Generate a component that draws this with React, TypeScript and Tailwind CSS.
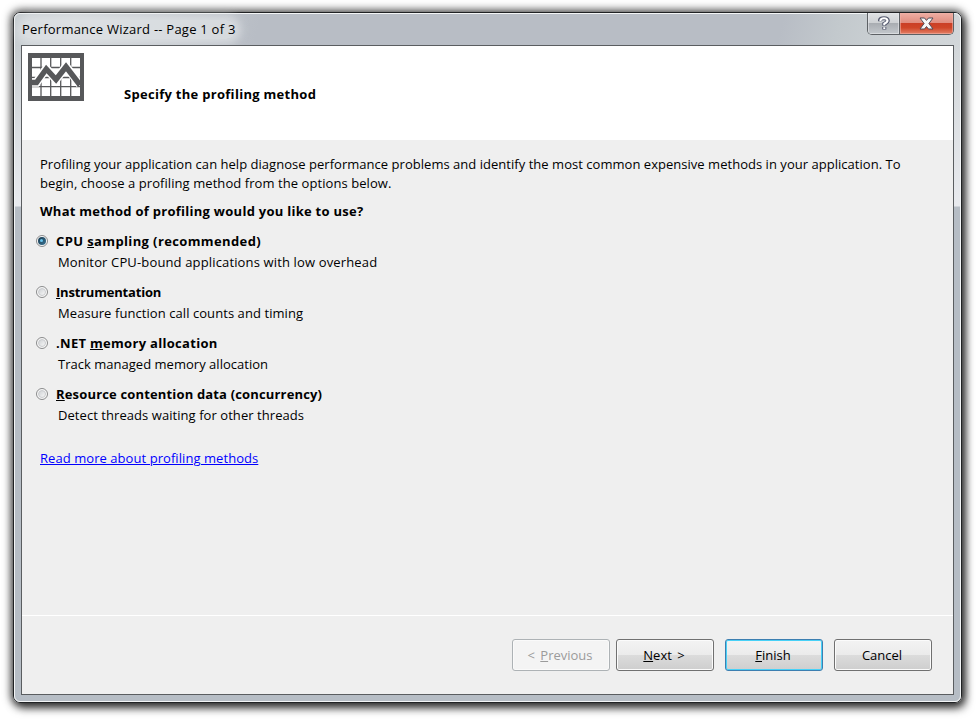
import React from "react";

type Option = { before?: string; key: string; after: string; detail: string; checked?: boolean; track: string; detailTrack: string };

const options: Option[] = [
  { before: "CPU ", key: "s", after: "ampling (recommended)", detail: "Monitor CPU-bound applications with low overhead", checked: true, track: "tracking-[0.38px]", detailTrack: "tracking-[0.145px]" },
  { key: "I", after: "nstrumentation", detail: "Measure function call counts and timing", track: "tracking-[-0.2px]", detailTrack: "tracking-[0.07px]" },
  { before: ".NET ", key: "m", after: "emory allocation", detail: "Track managed memory allocation", track: "tracking-[0.3px]", detailTrack: "tracking-[0.02px]" },
  { key: "R", after: "esource contention data (concurrency)", detail: "Detect threads waiting for other threads", track: "tracking-[0.16px]", detailTrack: "tracking-[0.06px]" },
];

function Key({ children }: { children: string }) {
  return <span className="underline decoration-1 underline-offset-1">{children}</span>;
}

function Radio({ checked }: { checked?: boolean }) {
  return (
    <span className="flex size-3 shrink-0 items-center justify-center rounded-full border border-[#8a8b8c] bg-[#f8f8f8]">
      {checked ? (
        <span className="flex size-2 items-center justify-center rounded-full bg-linear-to-br from-[#17394f] to-[#3b7595]">
          <span className="mb-px mr-px size-[3px] rounded-full bg-[#69c5ee]" />
        </span>
      ) : (
        <span className="size-2 rounded-full border border-[#c9cbce] bg-linear-to-br from-[#cfd2d5] to-[#f7f7f7]" />
      )}
    </span>
  );
}

function Button({ kind = "normal", children }: { kind?: "normal" | "disabled" | "primary"; children: React.ReactNode }) {
  const look = {
    normal: "border-[#707070] bg-[linear-gradient(#f3f3f3_0%,#ebebeb_49%,#dcdcdc_50%,#cecece_100%)] text-black shadow-[inset_0_0_0_1px_#fbfbfb]",
    disabled: "border-[#adb2b5] bg-[#f4f4f4] text-[#9b9b9b] shadow-[inset_0_0_0_1px_#fafafa]",
    primary: "border-[#3c7fb1] bg-[linear-gradient(#f3f3f3_0%,#ebebeb_49%,#dcdcdc_50%,#cecece_100%)] text-black shadow-[inset_0_0_0_1px_#48d1f7]",
  }[kind];
  return <button className={"flex h-8 w-[98px] items-center justify-center rounded-[3px] border pr-0.5 whitespace-pre [word-spacing:2px] " + look}>{children}</button>;
}

function ChartIcon() {
  return (
    <svg width="56" height="48" viewBox="0 0 56 48" className="block">
      <path fill="#57585a" d="M0 0h56v48H0z" />
      <path fill="#fff" d="M4 5h48v38H4z" />
      <path stroke="#57585a" strokeWidth="1.3" fill="none" d="M13 5v38M22.700 5v38M32.700 5v38M42.700 5v38M4 14.500h48M4 24.500h48M4 33.700h48" />
      <path stroke="#fff" strokeWidth="8.500" fill="none" d="M4 29.500h4.500l9.800-14 9.700 11 10-13 14 18" />
      <path stroke="#57585a" strokeWidth="5.500" fill="none" d="M2 29.500h6.500l9.800-13.500 9.700 10.500 10-12.700 14 18.200" />
      <path fill="#57585a" d="M0 0h4v48H0zM52 0h4v48h-4z" />
    </svg>
  );
}

export default function App() {
  return (
    <div className="h-[722px] w-[980px] overflow-hidden bg-white pt-3 pl-[13px] font-['Open_Sans','Noto_Sans',sans-serif] text-[13px] leading-[19px] text-black">
      <div className="flex h-[691px] w-[949px] flex-col rounded-[7px] border border-[#202224] bg-[linear-gradient(105deg,#c6ccd0_0px,#d0d5d8_60px,#b8bdc5_240px,#b8bdc5_745px,#c3c9cd_800px,#ced3d6_870px,#d3d7da_940px)] shadow-[0_0_9px_2px_rgba(0,0,0,.7),3px_5px_10px_0_rgba(0,0,0,.6)]">
        <div className="flex min-h-0 grow flex-col rounded-[6px] border border-[#f3f5f6] bg-[linear-gradient(#e0e4e700_30px,#e8eaee_192px,#b6bdc5_193px,#b6bdc5_100%)] px-1.5 pb-1.5">
          <header className="flex h-[31px] shrink-0 items-start justify-between">
            <h1 className="mt-[6px] ml-px h-[19px] rounded-full bg-[#e2e5e8b0] text-[13px] tracking-[0.24px] whitespace-nowrap shadow-[0_0_8px_5px_#e2e5e8b0]">Performance Wizard -- Page 1 of 3</h1>
            <div className="-mt-px flex h-[22px] w-[87px] overflow-hidden rounded-b-[5px] border border-t-0 border-[#5d6165]">
              <button className="flex w-8 shrink-0 items-center justify-center border-r border-[#5d6165] bg-[linear-gradient(#e0e2e4_0%,#cdd0d3_48%,#a9adb2_50%,#c3c8cc_100%)] shadow-[inset_0_0_0_1px_#e7eaec99]">
                <svg width="12" height="15" viewBox="0 0 12 15">
                  <path d="M2 5.200V4Q2.500 2.200 6 2.200T9.800 4.500Q9.800 6.200 6.300 7.800V9.800M6.300 11v2.500" stroke="#565b70" strokeWidth="4" fill="none" />
                  <path d="M2.500 5V4Q3 2.200 6 2.200T9.500 4.500Q9.500 6.200 6.300 7.800V9.300M6.300 11.300v1.700" stroke="#fff" strokeWidth="2.100" fill="none" />
                </svg>
              </button>
              <button className="flex grow items-center justify-center bg-[linear-gradient(#efaea4_0%,#e08c7e_48%,#cb3f26_50%,#cf4528_70%,#e38167_100%)] shadow-[inset_0_0_0_1px_#f0b3a799]">
                <svg width="15" height="13" viewBox="0 0 15 13">
                  <path d="M1 1h4.500l2 2.400L9.500 1H14L9.900 6.500 14 12H9.500L7.500 9.500 5.500 12H1l4.100-5.500z" fill="#f7f7f7" stroke="#514b57" />
                </svg>
              </button>
            </div>
          </header>
          <main className="flex min-h-0 grow flex-col border border-[#5a5d60] bg-[#efefef]">
            <section className="flex h-[94px] shrink-0 items-start bg-white pt-[7px] pl-[6px]">
              <ChartIcon />
              <h2 className="mt-8 ml-10 font-bold whitespace-nowrap tracking-[0.29px]">Specify the profiling method</h2>
            </section>
            <section className="flex grow flex-col items-start pt-[15px] pl-[14px]">
              <p className="pl-1 whitespace-nowrap">
                <span className="tracking-[0.03px]">Profiling your application can help diagnose performance problems and identify the most common expensive methods in your application. To</span>
                <br />
                <span className="tracking-[0.07px]">begin, choose a profiling method from the options below.</span>
              </p>
              <h3 className="mt-[9px] mb-[11px] pl-1 font-bold tracking-[0.27px]">What method of profiling would you like to use?</h3>
              {options.map((o) => (
                <label key={o.key} className="flex h-[51px] whitespace-nowrap">
                  <span className="mt-[3px]"><Radio checked={o.checked} /></span>
                  <span className="ml-2">
                    <strong className={"block font-bold whitespace-pre " + o.track}>{o.before}<Key>{o.key}</Key>{o.after}</strong>
                    <span className={"mt-0.5 block pl-0.5 " + o.detailTrack}>{o.detail}</span>
                  </span>
                </label>
              ))}
              <a className="mt-[13px] ml-1 text-[#0000ff] underline decoration-1 underline-offset-1 tracking-[0.06px]">Read more about profiling methods</a>
            </section>
            <footer className="flex h-[79px] shrink-0 justify-end border-t border-white pt-[23px] pr-[21px]">
              <div className="mr-1.5"><Button kind="disabled">{"< "}<Key>P</Key>revious</Button></div>
              <div className="mr-[11px]"><Button><Key>N</Key>{"ext >"}</Button></div>
              <div className="mr-[11px]"><Button kind="primary"><Key>F</Key>inish</Button></div>
              <Button>Cancel</Button>
            </footer>
          </main>
        </div>
      </div>
    </div>
  );
}
